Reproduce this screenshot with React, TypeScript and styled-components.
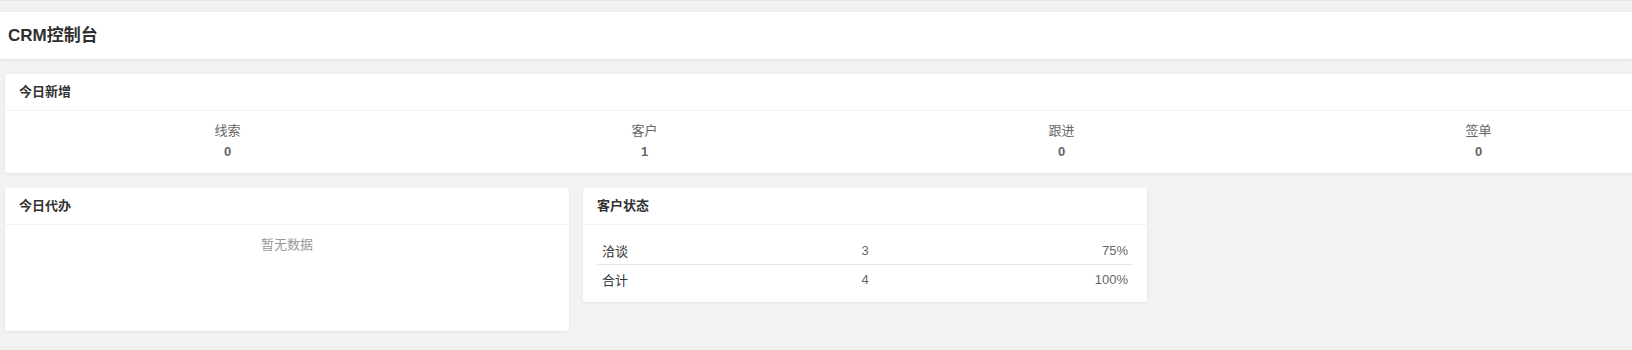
import React from 'react';
import styled, { createGlobalStyle } from 'styled-components';

const GlobalStyle = createGlobalStyle`
  html, body {
    margin: 0;
    padding: 0;
    background: #f2f2f2;
    overflow: hidden;
  }
  body {
    font-family: 'Liberation Sans', 'Noto Sans CJK SC', Arial, sans-serif;
    font-size: 13px;
    color: #333;
  }
`;

const Page = styled.div`
  width: 100vw;
  height: 350px;
  overflow: hidden;
  border-top: 1px solid #e8e8e8;
  padding-top: 11px;
  box-sizing: border-box;
`;

const TopBar = styled.div`
  height: 47px;
  line-height: 47px;
  background: #fff;
  padding-left: 8px;
  font-size: 17px;
  font-weight: bold;
  color: #2f2f2f;
  box-shadow: 0 1px 3px rgba(0, 0, 0, 0.08);
`;

const Content = styled.div`
  display: flex;
  flex-direction: column;
  gap: 15px;
  padding: 15px 0 0 5px;
`;

const Card = styled.div<{ width: number; height?: number }>`
  width: ${p => p.width}px;
  height: ${p => (p.height ? `${p.height}px` : 'auto')};
  flex-shrink: 0;
  background: #fff;
  border-radius: 2px;
  box-shadow: 0 1px 3px rgba(0, 0, 0, 0.07);
  box-sizing: border-box;
`;

const CardHeader = styled.div`
  height: 36px;
  line-height: 36px;
  padding: 0 14px;
  border-bottom: 1px solid #f3f3f3;
  font-size: 13px;
  font-weight: bold;
  color: #333;
`;

const Stats = styled.div`
  display: grid;
  grid-template-columns: repeat(4, 417px);
  padding: 10px 14px 11px;
`;

const Stat = styled.div`
  text-align: center;
  line-height: 20px;
  color: #666;
`;

const StatLabel = styled.div`
  font-size: 13px;
`;

const StatValue = styled.div`
  font-size: 13px;
  font-weight: bold;
  margin-top: 1px;
`;

const Row = styled.div`
  display: grid;
  grid-template-columns: 564px 564px;
  gap: 14px;
  align-items: start;
`;

const Empty = styled.div`
  padding-top: 10px;
  line-height: 20px;
  text-align: center;
  color: #999;
`;

const Table = styled.div`
  padding: 11px 14px 9px;
`;

const TableRow = styled.div<{ last?: boolean }>`
  display: grid;
  grid-template-columns: 1fr 1fr 1fr;
  height: 28px;
  align-items: center;
  border-bottom: ${p => (p.last ? 'none' : '1px solid #e6e6e6')};
  padding: 0 5px;
`;

const Cell = styled.div<{ align: 'left' | 'center' | 'right'; muted?: boolean }>`
  text-align: ${p => p.align};
  color: ${p => (p.muted ? '#666' : '#333')};
`;

const stats = [
  { label: '线索', value: 0 },
  { label: '客户', value: 1 },
  { label: '跟进', value: 0 },
  { label: '签单', value: 0 },
];

const statusRows = [
  { name: '洽谈', count: 3, pct: '75%' },
  { name: '合计', count: 4, pct: '100%' },
];

export default function App() {
  return (
    <>
      <GlobalStyle />
      <Page>
        <TopBar>CRM控制台</TopBar>
        <Content>
          <Card width={1696}>
            <CardHeader>今日新增</CardHeader>
            <Stats>
              {stats.map(s => (
                <Stat key={s.label}>
                  <StatLabel>{s.label}</StatLabel>
                  <StatValue>{s.value}</StatValue>
                </Stat>
              ))}
            </Stats>
          </Card>
          <Row>
            <Card width={564} height={143}>
              <CardHeader>今日代办</CardHeader>
              <Empty>暂无数据</Empty>
            </Card>
            <Card width={564}>
              <CardHeader>客户状态</CardHeader>
              <Table>
                {statusRows.map((r, i) => (
                  <TableRow key={r.name} last={i === statusRows.length - 1}>
                    <Cell align="left">{r.name}</Cell>
                    <Cell align="center" muted>{r.count}</Cell>
                    <Cell align="right" muted>{r.pct}</Cell>
                  </TableRow>
                ))}
              </Table>
            </Card>
          </Row>
        </Content>
      </Page>
    </>
  );
}
